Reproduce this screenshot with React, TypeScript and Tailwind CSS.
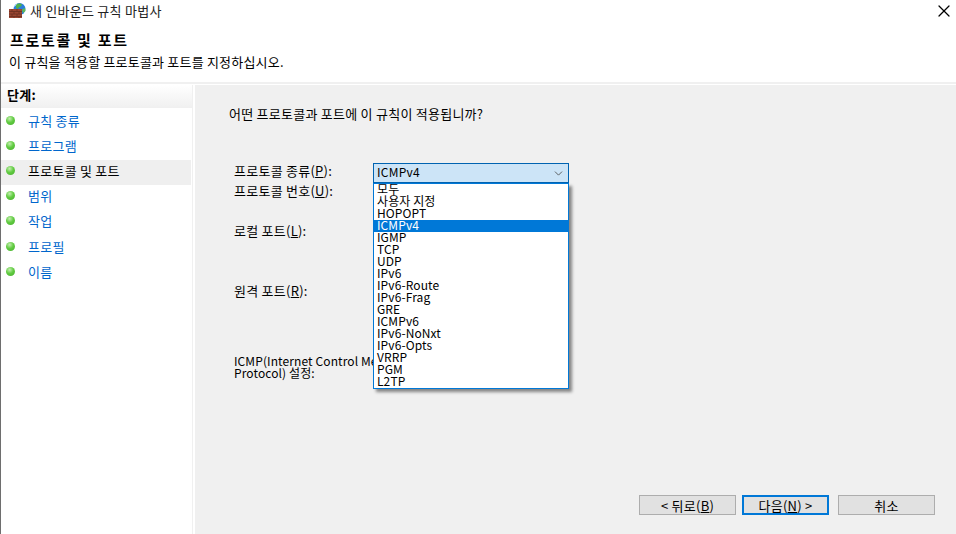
import { X, ChevronDown } from 'lucide-react';

const steps = [
  { name: '규칙 종류' },
  { name: '프로그램' },
  { name: '프로토콜 및 포트', active: true },
  { name: '범위' },
  { name: '작업' },
  { name: '프로필' },
  { name: '이름' },
];

const protocols = [
  '모두',
  '사용자 지정',
  'HOPOPT',
  'ICMPv4',
  'IGMP',
  'TCP',
  'UDP',
  'IPv6',
  'IPv6-Route',
  'IPv6-Frag',
  'GRE',
  'ICMPv6',
  'IPv6-NoNxt',
  'IPv6-Opts',
  'VRRP',
  'PGM',
  'L2TP',
];

function WallIcon() {
  return (
    <svg width="17" height="16" viewBox="0 0 17 16" className="shrink-0">
      <circle cx="10.500" cy="6" r="6" fill="#2a7fdc" />
      <path d="M7 1.500c2-1.500 4.500-1.500 6 0l-1 2-2 .5-1 2-2-1z" fill="#4fb04a" />
      <path d="M13 6.500l3-1.500 .5 3-2.500 2z" fill="#5cba52" />
      <path d="M5.500 3.500c.5-1 1-1.500 2-2" stroke="#bfe3ff" strokeWidth="1" fill="none" />
      <rect x="0" y="6" width="13" height="9" fill="#9a4632" />
      <path d="M0 8.500h13M0 11h13M0 13.500h13M3 6v2.500M8 6v2.500M5 8.500V11M10 8.500V11M3 11v2.500M8 11v2.500M5 13.500V15M10 13.500V15" stroke="#6a3022" strokeWidth=".8" fill="none" />
    </svg>
  );
}

function GreenDot() {
  return <span className="w-[9px] h-[9px] rounded-full shrink-0 bg-[radial-gradient(circle_at_40%_30%,#c4eeb0_0%,#62cc42_45%,#47ad2e_100%)]" />;
}

function Mnemonic({ label, keyName, rest }: { label: string; keyName: string; rest: string }) {
  return (
    <>
      {label}
      <span className="underline underline-offset-1">{keyName}</span>
      {rest}
    </>
  );
}

export default function App() {
  return (
    <div
      className="w-[956px] h-[534px] overflow-hidden flex flex-col bg-white border-l border-l-[#6e6e6e] text-[13px] tracking-[0.25px] text-black"
      style={{ fontFamily: '"Noto Sans CJK KR", "Noto Sans", sans-serif' }}
    >
      {/* Title bar */}
      <div className="h-[30px] flex items-center shrink-0 pl-[8px] pr-[2px] pb-[8px]">
        <WallIcon />
        <span className="ml-[4px] mb-[2px] leading-none text-[#222]">새 인바운드 규칙 마법사</span>
        <X className="ml-auto w-[20px] h-[20px] text-black" strokeWidth={1.5} />
      </div>

      {/* Header */}
      <div className="h-[54px] shrink-0 pl-[9px] border-b-2 border-b-[#f0f0f0]">
        <div className="text-[15px] tracking-[1.7px] font-bold leading-[18px] mt-[1px]">프로토콜 및 포트</div>
        <div className="leading-[18px] mt-[4px] -ml-[1px] tracking-[0.2px]">이 규칙을 적용할 프로토콜과 포트를 지정하십시오.</div>
      </div>

      <div className="flex flex-1 min-h-0 pt-px">
        {/* Steps */}
        <div className="w-[192px] shrink-0 flex flex-col border-r border-r-[#f0f0f0]">
          <div className="h-[23px] pl-[6px] font-bold leading-[20px] bg-gradient-to-b from-white to-[#f0f0f0]">단계:</div>
          <div className="pt-[2px]">
            {steps.map((s) => (
              <div
                key={s.name}
                className={`h-[25.100px] flex items-center pl-[5px] pb-[4px] mr-[1px] ${s.active ? 'bg-[#efefef] text-black' : 'text-[#0066cc]'}`}
              >
                <GreenDot />
                <span className="ml-[13px] leading-none">{s.name}</span>
              </div>
            ))}
          </div>
        </div>

        {/* Main panel */}
        <div className="relative flex-1 ml-[2px] bg-[#f0f0f0] flex flex-col">
          <div className="ml-[34px] mt-[20px] leading-[18px]">어떤 프로토콜과 포트에 이 규칙이 적용됩니까?</div>

          <div className="ml-[39px] mt-[40px] flex flex-col leading-[18px]">
            <div className="flex h-[20px] items-center">
              <div className="w-[139px] pb-[4px]">
                <Mnemonic label="프로토콜 종류(" keyName="P" rest="):" />
              </div>
              <div className="w-[196px] h-[20px] border border-[#0063b1] bg-[#cce4f7] flex items-center pl-[3px] pr-[3px] text-[12px]">
                <span className="leading-none mb-[2px]">ICMPv4</span>
                <ChevronDown className="ml-auto w-[13px] h-[13px] text-[#444]" strokeWidth={1.5} />
              </div>
            </div>
            <div className="mt-[-2px] h-[20px] flex items-center">
              <Mnemonic label="프로토콜 번호(" keyName="U" rest="):" />
            </div>
            <div className="mt-[20px] h-[20px] flex items-center">
              <Mnemonic label="로컬 포트(" keyName="L" rest="):" />
            </div>
            <div className="mt-[40px] h-[20px] flex items-center">
              <Mnemonic label="원격 포트(" keyName="R" rest="):" />
            </div>
            <div className="mt-[54px] leading-[12px] text-[12px] tracking-[0.1px] whitespace-nowrap">
              ICMP(Internet Control Message
              <br />
              Protocol) 설정:
            </div>
          </div>

          {/* Buttons */}
          <div className="mt-auto mb-[19px] mr-[21px] flex justify-end">
            <button className="w-[97px] h-[20px] border border-[#adadad] bg-[#e1e1e1] flex items-center justify-center leading-none">
              <Mnemonic label="< 뒤로(" keyName="B" rest=")" />
            </button>
            <button className="ml-[6px] w-[87px] h-[20px] border-2 border-[#0078d7] bg-[#e1e1e1] flex items-center justify-center leading-none">
              <Mnemonic label="다음(" keyName="N" rest=") >" />
            </button>
            <button className="ml-[9px] w-[97px] h-[20px] border border-[#adadad] bg-[#e1e1e1] flex items-center justify-center leading-none">
              취소
            </button>
          </div>

          {/* Dropdown list */}
          <div className="absolute left-[178px] top-[98px] w-[196px] bg-white border border-[#0078d7] text-[12px] tracking-[0.1px] shadow-[3px_3px_3px_rgba(0,0,0,0.45)]">
            {protocols.map((p) => (
              <div
                key={p}
                className={`h-[12px] leading-[10px] pl-[3px] whitespace-nowrap ${p === 'ICMPv4' ? 'bg-[#0078d7] text-white' : 'text-black'}`}
              >
                {p}
              </div>
            ))}
          </div>
        </div>
      </div>
    </div>
  );
}
